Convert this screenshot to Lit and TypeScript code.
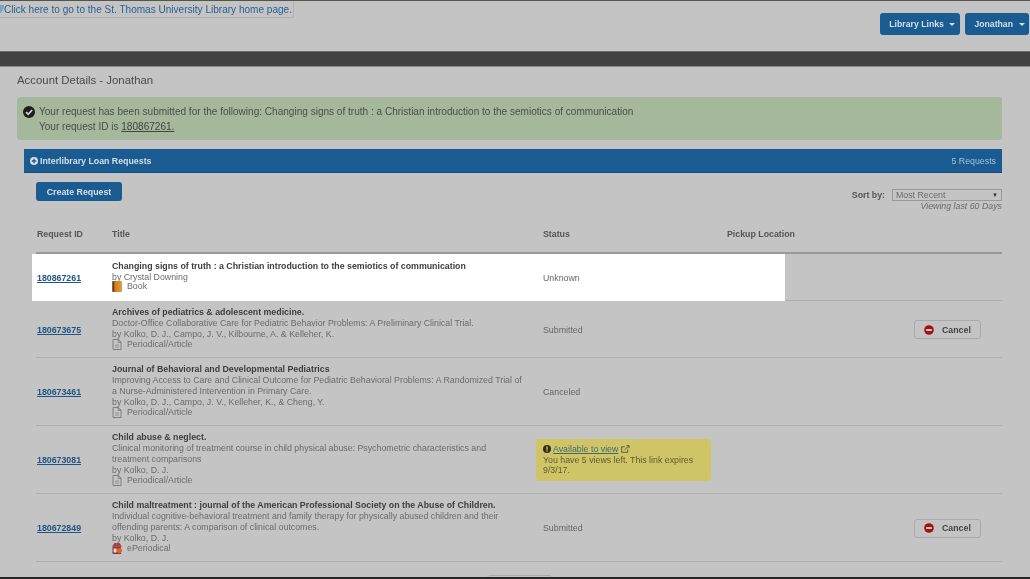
import { LitElement, html, css } from "lit";
import { customElement } from "lit/decorators.js";

const bookIcon = html`<svg class="type-icon" viewBox="0 0 10 11"><defs><linearGradient id="bk" x1="0" x2="1" y1="0" y2="0"><stop offset="0" stop-color="#9a5a1c"/><stop offset="0.35" stop-color="#c97f26"/><stop offset="1" stop-color="#e0a043"/></linearGradient></defs><rect width="10" height="11" rx="1" fill="url(#bk)"/><rect x="1" width="1.2" height="11" fill="#6e3d12"/></svg>`;
const docIcon = html`<svg class="type-icon" viewBox="0 0 10 11" fill="none" stroke="#6f6f6f" stroke-width="0.8"><path d="M1 .5h5.3L9 3.2v7.3H1z"/><path d="M6.2.6v2.7H9"/><path d="M3 6h4M3 8h4" stroke="#8a8a8a"/></svg>`;
const ePeriodIcon = html`<svg class="type-icon" viewBox="0 0 10 11"><path d="M2.5 0h5L10 3.5H0z" fill="#a8443f"/><rect x=".5" y="3.5" width="8.5" height="7.5" fill="#8f3533"/><rect x="1.6" y="5.5" width="3" height="4" fill="#ddd"/><circle cx="7.4" cy="7.6" r="2.6" fill="#e0642a"/></svg>`;
const minusIcon = html`<svg class="minus" viewBox="0 0 12 12"><circle cx="6" cy="6" r="5.8" fill="#a80f12"/><rect x="2.6" y="4.9" width="6.8" height="2.2" fill="#e8d8d8"/></svg>`;

interface Row { id: string; title: string; lines: string[]; type: string; icon: unknown; status?: string; cancel?: boolean; avail?: boolean; h: string; hl?: boolean }

const rows: Row[] = [
  { id: "180867261", title: "Changing signs of truth : a Christian introduction to the semiotics of communication", lines: ["by Crystal Downing"], type: "Book", icon: bookIcon, status: "Unknown", h: "h47", hl: true },
  { id: "180673675", title: "Archives of pediatrics & adolescent medicine.", lines: ["Doctor-Office Collaborative Care for Pediatric Behavior Problems: A Preliminary Clinical Trial.", "by Kolko, D. J., Campo, J. V., Kilbourne, A. & Kelleher, K."], type: "Periodical/Article", icon: docIcon, status: "Submitted", cancel: true, h: "h57" },
  { id: "180673461", title: "Journal of Behavioral and Developmental Pediatrics", lines: ["Improving Access to Care and Clinical Outcome for Pediatric Behavioral Problems: A Randomized Trial of", "a Nurse-Administered Intervention in Primary Care.", "by Kolko, D. J., Campo, J. V., Kelleher, K., & Cheng, Y."], type: "Periodical/Article", icon: docIcon, status: "Canceled", h: "h68" },
  { id: "180673081", title: "Child abuse & neglect.", lines: ["Clinical monitoring of treatment course in child physical abuse: Psychometric characteristics and", "treatment comparisons", "by Kolko, D. J."], type: "Periodical/Article", icon: docIcon, avail: true, h: "h68" },
  { id: "180672849", title: "Child maltreatment : journal of the American Professional Society on the Abuse of Children.", lines: ["Individual cognitive-behavioral treatment and family therapy for physically abused children and their", "offending parents: A comparison of clinical outcomes.", "by Kolko, D. J."], type: "ePeriodical", icon: ePeriodIcon, status: "Submitted", cancel: true, h: "h68" },
];

@customElement("app-root")
export class AppRoot extends LitElement {
  static styles = css`
    :host { display: flex; flex-direction: column; height: 579px; overflow: hidden; background: #c4c4c4; color: #666; font-family: "Liberation Sans", Arial, sans-serif; font-size: 8.8px; filter: blur(0.5px); }
    a { color: #1f5487; }
    .topline { height: 1px; background: #55554f; flex: none; }
    .header { height: 50px; flex: none; display: flex; justify-content: space-between; align-items: flex-start; box-sizing: border-box; }
    .logo { display: flex; align-items: center; height: 17px; width: 294px; box-sizing: border-box; border: 1px solid #b0b0b0; border-width: 0 1px 1px 0; color: #2a5f93; font-size: 10.05px; white-space: nowrap; overflow: hidden; }
    .logo svg { width: 4px; height: 9px; flex: none; }
    .nav { display: flex; gap: 5px; padding: 12px 1px 0 0; }
    .nav-btn { display: flex; align-items: center; gap: 5.5px; height: 22px; box-sizing: border-box; background: #1a5c92; color: #d6dfe7; font-weight: 700; border-radius: 3px; padding: 0 4.5px 0 9.5px; font-size: 8.7px; }
    .caret { width: 0; height: 0; border-left: 3px solid transparent; border-right: 3px solid transparent; border-top: 3px solid #d6dfe7; }
    .band { height: 16px; flex: none; background: #424242; border-top: 1px solid #6a6a6a; border-bottom: 1px solid #8a8a8a; box-sizing: border-box; }
    .main { flex: 1; min-height: 0; display: flex; flex-direction: column; padding: 0 28px 0 17px; overflow: hidden; }
    .main > * { flex: none; }
    h1 { margin: 7px 0 0; font-weight: 400; font-size: 11.4px; line-height: 13px; color: #4a4a4a; }
    .alert { margin-top: 10px; height: 43px; box-sizing: border-box; background: #a6b89b; border-radius: 3px; padding: 7px 0 0 6px; display: grid; grid-template-columns: 16px 1fr; align-content: start; font-size: 10.05px; line-height: 15px; color: #494f48; }
    .alert svg { width: 12px; height: 12px; margin-top: 1.5px; }
    .alert .line2 { grid-column: 2; }
    .alert a { color: #3f4540; }
    .panel { margin: 9px 0 0 7px; height: 24px; box-sizing: border-box; background: #1a5c92; border-bottom: 1px solid #124a78; display: flex; align-items: center; justify-content: space-between; padding: 0 6px; color: #d6dfe7; }
    .panel-title { display: flex; align-items: center; gap: 2px; font-weight: 700; }
    .panel-title svg { width: 8px; height: 8px; }
    .panel-count { color: #a9c0d4; }
    .content { margin-left: 19px; }
    .tools { display: flex; justify-content: space-between; align-items: flex-start; height: 49px; padding-top: 9px; box-sizing: border-box; }
    .create { height: 19px; width: 86px; display: flex; align-items: center; justify-content: center; background: #1a5c92; color: #d6dfe7; font-weight: 700; border-radius: 3px; }
    .sort { display: flex; flex-direction: column; align-items: flex-end; margin-top: 7px; }
    .sort-row { display: flex; align-items: center; gap: 7px; }
    .sort-label { font-weight: 700; color: #555; }
    .select { width: 110px; height: 12px; box-sizing: border-box; border: 1px solid #9a9a9a; display: flex; justify-content: space-between; align-items: center; padding: 0 3px; color: #6b6b6b; }
    .select span:last-child { font-size: 6px; color: #333; }
    .viewing { font-style: italic; color: #6b6b6b; line-height: 11px; }
    .grid-row { display: grid; grid-template-columns: 76px 431px 184px 1fr; align-items: center; }
    .head { height: 32px; box-sizing: border-box; font-weight: 700; color: #555; padding-bottom: 7px; border-bottom: 2px solid #999; }
    .head span:first-child { padding-left: 1px; }
    .row { position: relative; border-bottom: 1px solid #aeaeae; box-sizing: border-box; z-index: 0; }
    .row.hl::before { content: ""; position: absolute; z-index: -1; left: -4px; top: 0; bottom: -1px; width: 753px; background: #fff; }
    .h47 { height: 47px; }
    .h57 { height: 57px; }
    .h68 { height: 68px; }
    .id { padding: 1px 0 0 1px; font-weight: 700; color: #1f5487; }
    .title-cell { line-height: 10.8px; color: #6b6b6b; }
    .title { font-weight: 700; color: #3e3e3e; white-space: nowrap; }
    .desc { white-space: nowrap; }
    .type { display: flex; align-items: center; gap: 5px; margin: -1px 0 1px; }
    .type-icon { width: 10px; height: 11px; flex: none; }
    .status { padding-top: 1px; }
    .avail { margin-left: -7px; width: 175px; height: 42px; box-sizing: border-box; background: #cfc566; border-radius: 3px; padding: 5px 7px; line-height: 10.7px; color: #5e5c34; }
    .avail a { color: #3f6b6b; }
    .avail svg { width: 8px; height: 8px; vertical-align: -1px; }
    .avail svg.ext { width: 9px; }
    .actions { display: flex; justify-content: flex-end; padding: 1px 21px 0 0; }
    .cancel { width: 67px; height: 19px; box-sizing: border-box; border: 1px solid #aaa; border-radius: 3px; display: flex; align-items: center; gap: 8px; padding-left: 9px; font-weight: 700; color: #444; }
    .minus { width: 10px; height: 10px; }
    .more-wrap { display: flex; justify-content: center; margin-top: 13px; }
    .more { width: 65px; height: 8px; flex: none; box-sizing: border-box; border: 1px solid #aaa; border-radius: 3px 3px 0 0; }
    .footer { height: 2px; background: #262626; flex: none; }
  `;

  render() {
    return html`
      <div class="topline"></div>
      <div class="header">
        <div class="logo"><svg viewBox="0 0 4 9"><path d="M0 0h4v3L1 8H0z" fill="#7fa2c4"/></svg>Click here to go to the St. Thomas University Library home page.</div>
        <div class="nav">
          <div class="nav-btn">Library Links <span class="caret"></span></div>
          <div class="nav-btn">Jonathan <span class="caret"></span></div>
        </div>
      </div>
      <div class="band"></div>
      <div class="main">
        <h1>Account Details - Jonathan</h1>
        <div class="alert">
          <svg viewBox="0 0 12 12"><circle cx="6" cy="6" r="6" fill="#1d1d1d"/><path d="M3 6.2 5.2 8.3 9.2 4" fill="none" stroke="#cfd6ca" stroke-width="1.8"/></svg>
          <span>Your request has been submitted for the following: Changing signs of truth : a Christian introduction to the semiotics of communication</span>
          <span class="line2">Your request ID is <a href="#">180867261.</a></span>
        </div>
        <div class="panel">
          <div class="panel-title"><svg viewBox="0 0 8 8"><circle cx="4" cy="4" r="4" fill="#d6dfe7"/><path d="M1.8 4h4.4M4 1.8v4.4" stroke="#1a5c92" stroke-width="1.3"/></svg>Interlibrary Loan Requests</div>
          <div class="panel-count">5 Requests</div>
        </div>
        <div class="content">
          <div class="tools">
            <div class="create">Create Request</div>
            <div class="sort">
              <div class="sort-row"><span class="sort-label">Sort by:</span><div class="select"><span>Most Recent</span><span>▼</span></div></div>
              <div class="viewing">Viewing last 60 Days</div>
            </div>
          </div>
          <div class="grid-row head"><span>Request ID</span><span>Title</span><span>Status</span><span>Pickup Location</span></div>
          ${rows.map((r) => html`
            <div class="grid-row row ${r.h} ${r.hl ? "hl" : ""}">
              <a class="id" href="#">${r.id}</a>
              <div class="title-cell">
                <div class="title">${r.title}</div>
                ${r.lines.map((l) => html`<div class="desc">${l}</div>`)}
                <div class="type">${r.icon}<span>${r.type}</span></div>
              </div>
              <div class="status">
                ${r.avail
                  ? html`<div class="avail"><svg viewBox="0 0 8 8"><circle cx="4" cy="4" r="4" fill="#2e2e20"/><rect x="3.3" y="1.5" width="1.4" height="3.2" fill="#cfc566"/><rect x="3.3" y="5.3" width="1.4" height="1.3" fill="#cfc566"/></svg> <a href="#">Available to view</a> <svg class="ext" viewBox="0 0 10 9" fill="none" stroke="#44443a" stroke-width="0.9"><path d="M7.5 5v3.2H.7V2H4"/><path d="M4 5.5 8.7 1M6 .7h3v3"/></svg><br />You have 5 views left. This link expires 9/3/17.</div>`
                  : r.status}
              </div>
              <div class="actions">${r.cancel ? html`<div class="cancel">${minusIcon}<span>Cancel</span></div>` : ""}</div>
            </div>`)}
          <div class="more-wrap"><div class="more"></div></div>
        </div>
      </div>
      <div class="footer"></div>
    `;
  }
}
